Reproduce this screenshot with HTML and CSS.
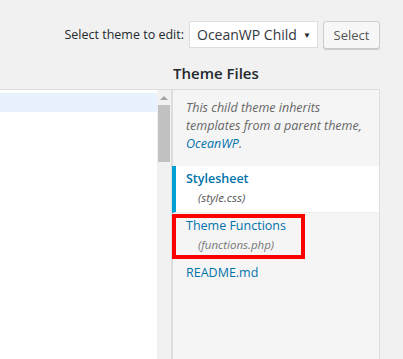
FILE: index.html
```html
<!DOCTYPE html>
<html lang="en">
<head>
    <meta charset="UTF-8">
    <meta name="viewport" content="width=device-width, initial-scale=1.0">
    <title>Edit Themes</title>
    <link rel="stylesheet" href="styles.css">
</head>
<body>
    <div class="wrap">
        <div class="theme-select">
            <label for="theme">Select theme to edit:</label>
            <div class="select" id="theme">
                <span>OceanWP Child</span>
                <span class="caret">&#9660;</span>
            </div>
            <button class="button">Select</button>
        </div>

        <div class="layout">
            <div class="spacer"></div>
            <h2 class="files-title">Theme Files</h2>

            <div class="editor">
                <div class="code">
                    <div class="active-line"></div>
                </div>
                <div class="scrollbar">
                    <div class="scroll-up"></div>
                    <div class="thumb"></div>
                </div>
            </div>

            <div class="files">
                <p class="child-note">This child theme inherits templates from a parent theme, <a href="#">OceanWP</a>.</p>
                <ul class="file-list">
                    <li class="file current">
                        <a href="#">Stylesheet</a>
                        <span class="file-name">(style.css)</span>
                    </li>
                    <li class="file">
                        <a href="#">Theme Functions</a>
                        <span class="file-name light">(functions.php)</span>
                        <div class="marker"></div>
                    </li>
                    <li class="file">
                        <a href="#">README.md</a>
                    </li>
                </ul>
            </div>
        </div>
    </div>
</body>
</html>
```

FILE: styles.css
```css
body {
    margin: 0;
    background-color: #f1f1f1;
    font-family: "Open Sans", "Noto Sans", sans-serif;
    font-size: 12.5px;
    color: #23282d;
    overflow: hidden;
}

.wrap {
    height: 359px;
    display: flex;
    flex-direction: column;
}

/* barra de seleção do tema */
.theme-select {
    display: flex;
    justify-content: flex-end;
    align-items: center;
    gap: 5px;
    padding: 20px 23px 0 0;
    height: 29px;
}

.theme-select label {
    color: #23282d;
}

.select {
    box-sizing: border-box;
    width: 129px;
    height: 27px;
    background-color: #fff;
    border: 1px solid #ddd;
    display: flex;
    align-items: center;
    justify-content: space-between;
    padding: 0 6px 0 7px;
    font-size: 14px;
    color: #32373c;
}

.caret {
    font-size: 8px;
    color: #23282d;
}

.button {
    box-sizing: border-box;
    width: 57px;
    height: 28px;
    background-color: #f7f7f7;
    border: 1px solid #ccc;
    border-radius: 3px;
    box-shadow: 0 1px 0 #ccc;
    font-family: inherit;
    font-size: 13px;
    color: #555;
    padding: 0;
}

/* editor + lista de arquivos */
.layout {
    flex: 1;
    display: grid;
    grid-template-columns: 172px 208px;
    grid-template-rows: 40px 1fr;
}

.files-title {
    margin: 0;
    padding: 14px 0 0 1px;
    font-size: 15px;
    font-weight: 600;
    line-height: 20px;
    color: #23282d;
}

.editor {
    display: flex;
    background-color: #fff;
    border-top: 1px solid #ddd;
}

.code {
    flex: 1;
    padding-top: 3px;
}

.active-line {
    height: 19px;
    background-color: #e8f2fe;
}

.scrollbar {
    width: 14px;
    background-color: #f1f1f1;
    border-right: 1px solid #ddd;
    display: flex;
    flex-direction: column;
    align-items: center;
}

.scroll-up {
    width: 0;
    height: 0;
    margin-top: 6px;
    border-left: 4px solid transparent;
    border-right: 4px solid transparent;
    border-bottom: 4px solid #a3a3a3;
}

.thumb {
    width: 12px;
    height: 57px;
    margin-top: 5px;
    background-color: #c1c1c1;
}

.files {
    background-color: #f5f5f5;
    border: 1px solid #ddd;
    border-bottom: none;
}

.child-note {
    margin: 0;
    padding: 9px 4px 13px 13px;
    font-style: italic;
    line-height: 18px;
    color: #666;
}

.child-note a,
.file a {
    color: #0073aa;
    text-decoration: none;
}

.file-list {
    list-style: none;
    margin: 0;
    padding: 0;
}

.file {
    position: relative;
    padding: 2px 12px 7px 10px;
    border-left: 4px solid transparent;
    margin-left: -1px;
}

.file a {
    display: block;
    line-height: 22px;
}

.file.current {
    background-color: #fff;
    border-left-color: #00a0d2;
    border-bottom: 1px solid #eee;
    padding-bottom: 6px;
}

.file.current a {
    font-weight: 600;
}

.file-name {
    display: block;
    padding-left: 12px;
    font-size: 11.5px;
    font-style: italic;
    line-height: 16px;
    color: #555;
}

.file-name.light {
    color: #777;
}

/* caixa vermelha de destaque */
.marker {
    position: absolute;
    top: 1px;
    left: -4px;
    width: 125px;
    height: 37px;
    border: 4px solid #ff0000;
}
```
